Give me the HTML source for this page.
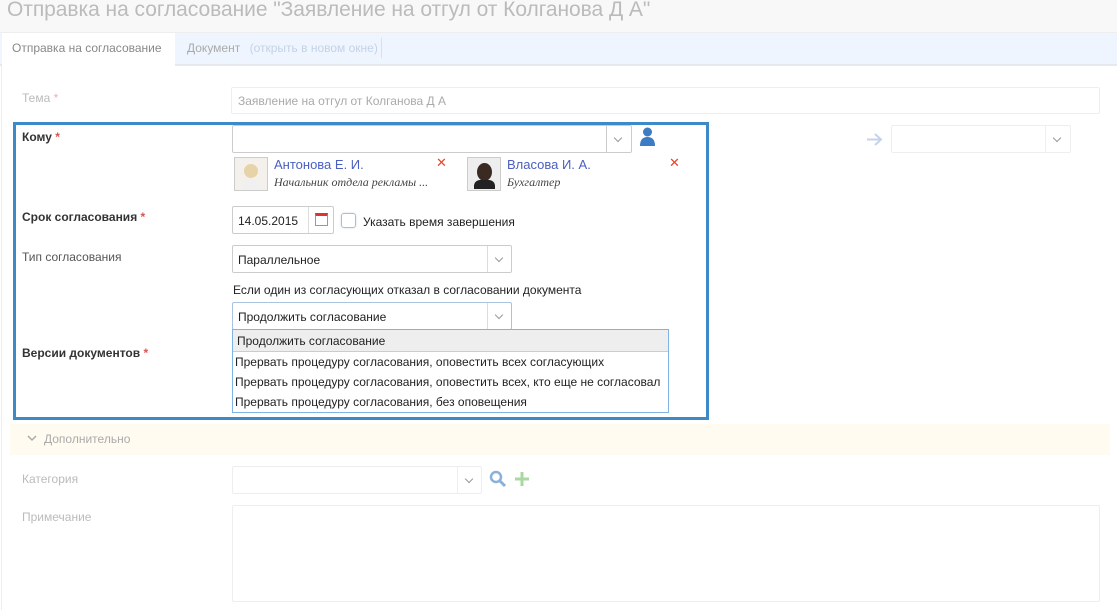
<!DOCTYPE html>
<html><head><meta charset="utf-8"><style>
*{box-sizing:border-box}
body{margin:0;width:1117px;height:610px;overflow:hidden;background:#fff;font-family:"Liberation Sans",sans-serif;font-size:12px;color:#333;position:relative}
.a{position:absolute}
.inp{position:absolute;border:1px solid #ccc;background:#fff;border-radius:2px}
.faint{border-color:#eee}
.lbl{position:absolute;left:22px;font-size:12px}
.b{font-weight:bold}
.req{color:#d9534f}
.dd{position:absolute;right:0;top:0;bottom:0;width:24px;border-left:1px solid #ccc}
.dd:after{content:"";position:absolute;left:8px;top:9px;width:5px;height:5px;border-right:1px solid #999;border-bottom:1px solid #999;transform:rotate(45deg)}
</style></head><body>
<div class="a" style="left:0;top:0;width:1117px;height:33px;background:#f8f8f8"></div>
<div class="a" style="left:7px;top:-2px;font-size:21px;color:#bbb;white-space:nowrap;letter-spacing:-0.05px">Отправка на согласование "Заявление на отгул от Колганова Д А"</div>
<div class="a" style="left:0;top:32px;width:1117px;height:34px;background:#eef5fe;border-top:1px solid #eee;border-bottom:2px solid #e5e9ee"></div>
<div class="a" style="left:2px;top:33px;width:173px;height:33px;background:#fff"></div>
<div class="a" style="left:12px;top:41px;color:#888">Отправка на согласование</div>
<div class="a" style="left:187px;top:41px;color:#aaa">Документ <span style="color:#c4d2e6;margin-left:6px">(открыть в новом окне)</span></div>
<div class="a" style="left:381px;top:38px;width:1px;height:20px;background:#dde"></div>
<div class="a" style="left:1px;top:66px;width:1px;height:544px;background:#eee"></div>

<div class="lbl" style="top:91px;color:#bbb">Тема <span style="color:#f0b0b0">*</span></div>
<div class="inp faint" style="left:231px;top:87px;width:869px;height:27px"></div>
<div class="a" style="left:238px;top:94px;color:#aaa">Заявление на отгул от Колганова Д А</div>

<div class="a" style="left:13px;top:122px;width:696px;height:298px;border:3px solid #3d8ac7"></div>
<div class="lbl b" style="top:130px">Кому <span class="req">*</span></div>
<div class="inp" style="left:232px;top:125px;width:400px;height:28px"><div class="dd" style="width:25px"></div></div>
<svg class="a" style="left:639px;top:127px" width="17" height="19" viewBox="0 0 17 19"><circle cx="8.5" cy="5" r="4.5" fill="#3b7cc4"/><path d="M1 19 Q1 10 8.5 10 Q16 10 16 19Z" fill="#3b7cc4"/></svg>
<div class="a" style="left:234px;top:157px;width:34px;height:34px;border:1px solid #ccc;background:#f4f1ec"><div style="margin:6px 0 0 9px;width:14px;height:14px;border-radius:50%;background:#e8d2a8"></div><div style="margin:2px 0 0 7px;width:18px;height:10px;background:#f0f0f0;border-radius:6px 6px 0 0"></div></div>
<div class="a" style="left:274px;top:157px;color:#4a5fc1;font-size:13px">Антонова Е. И.</div>
<div class="a" style="left:274px;top:175px;font-family:'Liberation Serif',serif;font-style:italic;color:#444">Начальник отдела рекламы ...</div>
<div class="a" style="left:436px;top:155px;color:#e8452a;font-size:13px">✕</div>
<div class="a" style="left:467px;top:157px;width:34px;height:34px;border:1px solid #ccc;background:#eee"><div style="margin:5px 0 0 9px;width:15px;height:18px;border-radius:50%;background:#3a2a22"></div><div style="margin:-1px 0 0 6px;width:21px;height:9px;background:#222;border-radius:6px 6px 0 0"></div></div>
<div class="a" style="left:507px;top:157px;color:#4a5fc1;font-size:13px">Власова И. А.</div>
<div class="a" style="left:507px;top:175px;font-family:'Liberation Serif',serif;font-style:italic;color:#444">Бухгалтер</div>
<div class="a" style="left:669px;top:155px;color:#e8452a;font-size:13px">✕</div>

<svg class="a" style="left:866px;top:132px" width="17" height="15"><path d="M1 7.5H15M9 2L15 7.5L9 13" fill="none" stroke="#c5d3e8" stroke-width="2"/></svg>
<div class="inp faint" style="left:891px;top:125px;width:180px;height:28px"><div class="dd" style="border-color:#eee;width:25px"></div></div>

<div class="lbl b" style="top:210px">Срок согласования <span class="req">*</span></div>
<div class="inp" style="left:232px;top:206px;width:102px;height:28px"><div style="position:absolute;left:5px;top:7px;color:#222">14.05.2015</div><div style="position:absolute;left:75px;top:0;bottom:0;border-left:1px solid #ddd;width:26px"><div style="margin:6px 0 0 6px;width:13px;height:13px;border:1px solid #999;border-top:3px solid #d33;background:#fff"></div></div></div>
<div class="a" style="left:341px;top:213px;width:15px;height:15px;border:1px solid #bbb;border-radius:3px;box-shadow:0 0 2px #cde"></div>
<div class="a" style="left:363px;top:215px;color:#222">Указать время завершения</div>

<div class="lbl" style="top:250px;color:#555">Тип согласования</div>
<div class="inp" style="left:232px;top:245px;width:280px;height:28px"><div style="position:absolute;left:5px;top:7px;color:#222">Параллельное</div><div class="dd" style="border-color:#ddd"></div></div>
<div class="a" style="left:233px;top:283px;color:#222">Если один из согласующих отказал в согласовании документа</div>
<div class="inp" style="left:232px;top:302px;width:280px;height:28px;border-color:#aac4e0"><div style="position:absolute;left:5px;top:7px;color:#222">Продолжить согласование</div><div class="dd" style="border-color:#ddd"></div></div>

<div class="lbl b" style="top:346px">Версии документов <span class="req">*</span></div>
<div class="a" style="left:232px;top:329px;width:437px;height:84px;border:1px solid #7fb3e6;background:#fff">
<div style="height:22px;background:#eee;border-bottom:1px solid #ccc;padding:4px 4px;color:#222">Продолжить согласование</div>
<div style="padding:0 2px;line-height:20px;color:#222;font-size:12px;white-space:nowrap">Прервать процедуру согласования, оповестить всех согласующих<br>Прервать процедуру согласования, оповестить всех, кто еще не согласовал<br>Прервать процедуру согласования, без оповещения</div></div>

<div class="a" style="left:10px;top:424px;width:1100px;height:31px;background:#fffbf1"></div>
<svg class="a" style="left:27px;top:434px" width="10" height="8"><path d="M1 2L5 6L9 2" fill="none" stroke="#aaa" stroke-width="1.5"/></svg>
<div class="a" style="left:44px;top:432px;color:#aaa">Дополнительно</div>

<div class="lbl" style="top:472px;color:#bbb">Категория</div>
<div class="inp faint" style="left:232px;top:466px;width:250px;height:28px"><div class="dd" style="border-color:#eee"></div></div>
<svg class="a" style="left:489px;top:470px" width="18" height="18"><circle cx="7" cy="7" r="5" fill="none" stroke="#8ab0dc" stroke-width="2.5"/><path d="M11 11L16 16" stroke="#8ab0dc" stroke-width="3"/></svg>
<svg class="a" style="left:514px;top:471px" width="16" height="16"><path d="M8 1V15M1 8H15" stroke="#a9d8a0" stroke-width="3"/></svg>
<div class="lbl" style="top:510px;color:#bbb">Примечание</div>
<div class="inp faint" style="left:232px;top:505px;width:868px;height:97px"></div>
</body></html>
